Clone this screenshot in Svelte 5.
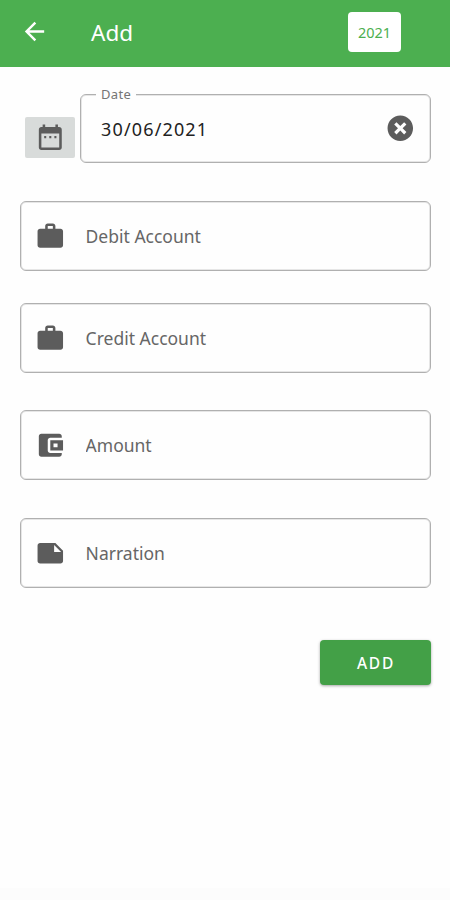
<script lang="ts">
  type Field = { id: string; label: string; icon: string; gap: number };

  const icons = {
    back: "M20 11H7.83l5.59-5.59L12 4l-8 8 8 8 1.41-1.41L7.83 13H20v-2z",
    calendar:
      "M8.8 11H7.2v1.8h1.6V11zm4 0h-1.6v1.8h1.6V11zm4 0h-1.6v1.8h1.6V11zM19 4h-1V2h-2v2H8V2H6v2H5c-1.11 0-1.99.9-1.99 2L3 20c0 1.1.89 2 2 2h14c1.1 0 2-.9 2-2V6c0-1.1-.9-2-2-2zm0 16H5V9h14v11z",
    clear:
      "M12 2C6.47 2 2 6.47 2 12s4.47 10 10 10 10-4.47 10-10S17.53 2 12 2zm4.8 13L15 16.8l-3-3-3 3L7.2 15l3-3-3-3L9 7.2l3 3 3-3L16.8 9l-3 3 3 3z",
    work: "M20 6h-4V4c0-1.11-.89-2-2-2h-4c-1.11 0-2 .89-2 2v2H4c-1.11 0-1.99.89-1.99 2L2 19c0 1.11.89 2 2 2h16c1.11 0 2-.89 2-2V8c0-1.11-.89-2-2-2zm-6 0h-4V4h4v2z",
    wallet:
      "M21 18v1c0 1.1-.9 2-2 2H5c-1.11 0-2-.9-2-2V5c0-1.1.89-2 2-2h14c1.1 0 2 .9 2 2v1h-9c-1.11 0-2 .9-2 2v8c0 1.1.89 2 2 2h9zm-9-2h10V8H12v8zm2.5-5.5h3.2v3h-3.2v-3z",
    note: "M22 10l-6-6H4c-1.1 0-2 .9-2 2v12.01c0 1.1.9 1.99 2 1.99l16-.01c1.1 0 2-.89 2-1.99v-8zm-7-4.5l5.5 5.5H15V5.5z",
  };

  const fields: Field[] = [
    { id: "debit", label: "Debit Account", icon: icons.work, gap: 38 },
    { id: "credit", label: "Credit Account", icon: icons.work, gap: 32 },
    { id: "amount", label: "Amount", icon: icons.wallet, gap: 37 },
    { id: "narration", label: "Narration", icon: icons.note, gap: 38 },
  ];

  let date = $state("30/06/2021");
  let values = $state<Record<string, string>>({
    debit: "",
    credit: "",
    amount: "",
    narration: "",
  });
</script>

{#snippet icon(path: string)}
  <svg viewBox="0 0 24 24" aria-hidden="true"><path d={path} /></svg>
{/snippet}

<main class="screen">
  <header class="app-bar">
    <button type="button" class="icon-btn back-btn" aria-label="Back">
      {@render icon(icons.back)}
    </button>
    <h1>Add</h1>
    <button type="button" class="year-btn">2021</button>
  </header>

  <form class="entry-form" onsubmit={event => event.preventDefault()}>
    <div class="date-row">
      <button type="button" class="icon-btn calendar-btn" aria-label="Pick date">
        {@render icon(icons.calendar)}
      </button>
      <fieldset class="date-field">
        <legend>Date</legend>
        <input bind:value={date} aria-label="Date" />
        <button
          type="button"
          class="icon-btn clear-btn"
          aria-label="Clear date"
          onclick={() => (date = "")}
        >
          {@render icon(icons.clear)}
        </button>
      </fieldset>
    </div>

    {#each fields as field (field.id)}
      <label class="field" style:margin-top="{field.gap}px">
        {@render icon(field.icon)}
        <input bind:value={values[field.id]} placeholder={field.label} />
      </label>
    {/each}

    <button type="submit" class="submit-btn">ADD</button>
  </form>
</main>

<style>
  :global(body) {
    background: #fefefe;
  }

  .screen {
    display: flex;
    flex-direction: column;
    box-sizing: border-box;
    height: 900px;
    overflow: hidden;
    border-bottom: 12px solid #fcfcfc;
    background: #fefefe;
    color: #222;
    font-family: "Noto Sans", sans-serif;
  }

  button,
  input {
    font: inherit;
  }

  svg {
    display: block;
    flex-shrink: 0;
    width: 30.6px;
    height: 30.6px;
    fill: #5c5c5c;
    fill-rule: evenodd;
  }

  .icon-btn {
    display: grid;
    place-items: center;
    flex-shrink: 0;
    padding: 0;
    border: none;
    background: transparent;
    cursor: pointer;
  }

  .app-bar {
    display: flex;
    align-items: center;
    box-sizing: border-box;
    height: 67px;
    padding: 0 49px 4px 20px;
    flex-shrink: 0;
    background: #4caf50;
    color: #fff;
  }

  .back-btn svg {
    width: 29px;
    height: 29px;
    fill: #fff;
  }

  .app-bar h1 {
    flex: 1;
    margin: 2px 0 0 42px;
    font-size: 22.5px;
    font-weight: 400;
    line-height: 30px;
  }

  .year-btn {
    width: 53px;
    height: 40px;
    padding: 0;
    border: none;
    border-radius: 4px;
    background: #fff;
    color: #4caf50;
    font-size: 14.5px;
  }

  .entry-form {
    display: flex;
    flex-direction: column;
    padding: 20px 19px 0 20px;
  }

  .date-row {
    display: flex;
    align-items: flex-end;
    gap: 5px;
    height: 76px;
    padding-left: 5px;
  }

  .calendar-btn {
    width: 50px;
    height: 41px;
    margin-bottom: 5px;
    border-radius: 2px;
    background: #d8dbda;
  }

  .date-field {
    display: flex;
    align-items: center;
    flex: 1;
    box-sizing: border-box;
    min-width: 0;
    height: 76px;
    margin: 0;
    padding: 0 14px 7px 15px;
    border: 1px solid #b0b0b0;
    border-radius: 6px;
    box-shadow: inset 0 0 0 1px #e6e6e6;
  }

  .date-field legend {
    padding: 0 5px;
    background: #fefefe;
    color: #757575;
    font-size: 13px;
    line-height: 15px;
    letter-spacing: 0.3px;
  }

  input {
    flex: 1;
    min-width: 0;
    padding: 0;
    border: none;
    background: transparent;
    color: #222;
    font-size: 17.5px;
    outline: none;
  }

  .date-field input {
    padding-left: 5px;
    font-size: 18px;
    letter-spacing: 1.15px;
  }

  .field {
    display: flex;
    align-items: center;
    gap: 20px;
    box-sizing: border-box;
    height: 70px;
    padding: 0 14px;
    border: 1px solid #b0b0b0;
    border-radius: 6px;
    box-shadow: inset 0 0 0 1px #e6e6e6;
  }

  .field input::placeholder {
    color: #666;
    opacity: 1;
  }

  .submit-btn {
    align-self: flex-end;
    width: 111px;
    height: 45px;
    margin-top: 52px;
    padding: 1px 0 0 1px;
    border: none;
    border-radius: 4px;
    background: #43a047;
    box-shadow: 0 1px 3px rgb(0 0 0 / 35%);
    color: #fff;
    font-size: 15.5px;
    font-weight: 500;
    letter-spacing: 1.8px;
    cursor: pointer;
  }
</style>
